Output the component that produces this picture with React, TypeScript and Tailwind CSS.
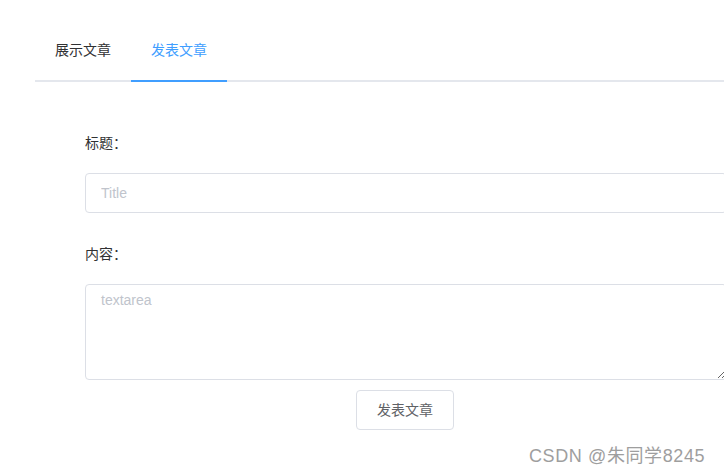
import React from "react";

const font = {
  fontFamily:
    '"Liberation Sans", Arial, "Noto Sans CJK SC", sans-serif',
};

export default function App() {
  return (
    <div
      className="relative w-[724px] h-[476px] overflow-hidden bg-white text-[14px] text-[#303133]"
      style={font}
    >
      {/* Tabs */}
      <div className="ml-[35px] mt-[30px] flex border-b-2 border-[#e4e7ed]">
        <div className="h-[50px] px-5 leading-10 text-[#303133] cursor-pointer">
          展示文章
        </div>
        <div className="h-[52px] -mb-[2px] px-5 leading-10 text-[#409eff] border-b-2 border-[#409eff] cursor-pointer">
          发表文章
        </div>
      </div>

      {/* Form */}
      <form className="ml-[85px] mt-[41px] flex flex-col">
        <label className="h-10 leading-10 mb-[10px] text-[#303133]">标题：</label>
        <input
          type="text"
          placeholder="Title"
          className="w-[642px] h-10 border border-[#dcdfe6] rounded px-[15px] text-[14px] text-[#606266] placeholder:text-[#c0c4cc] outline-none"
        />
        <label className="mt-[21px] h-10 leading-10 mb-[10px] text-[#303133]">
          内容：
        </label>
        <textarea
          rows={4}
          placeholder="textarea"
          className="block w-[642px] h-[96px] border border-[#dcdfe6] rounded px-[15px] py-[5px] leading-[1.5] text-[14px] text-[#606266] placeholder:text-[#c0c4cc] outline-none resize-y"
        />
        <div className="mt-[10px] w-[640px] flex justify-center">
          <button
            type="button"
            className="h-10 px-5 border border-[#dcdfe6] rounded bg-white text-[14px] text-[#606266]"
          >
            发表文章
          </button>
        </div>
      </form>

      {/* Watermark */}
      <div className="absolute left-[529px] top-[445px] text-[18px] leading-[22px] tracking-[0.6px] text-[#9e9e9e] whitespace-nowrap [text-shadow:0_0_1px_rgba(255,255,255,0.9)]">
        CSDN @朱同学8245
      </div>
    </div>
  );
}
